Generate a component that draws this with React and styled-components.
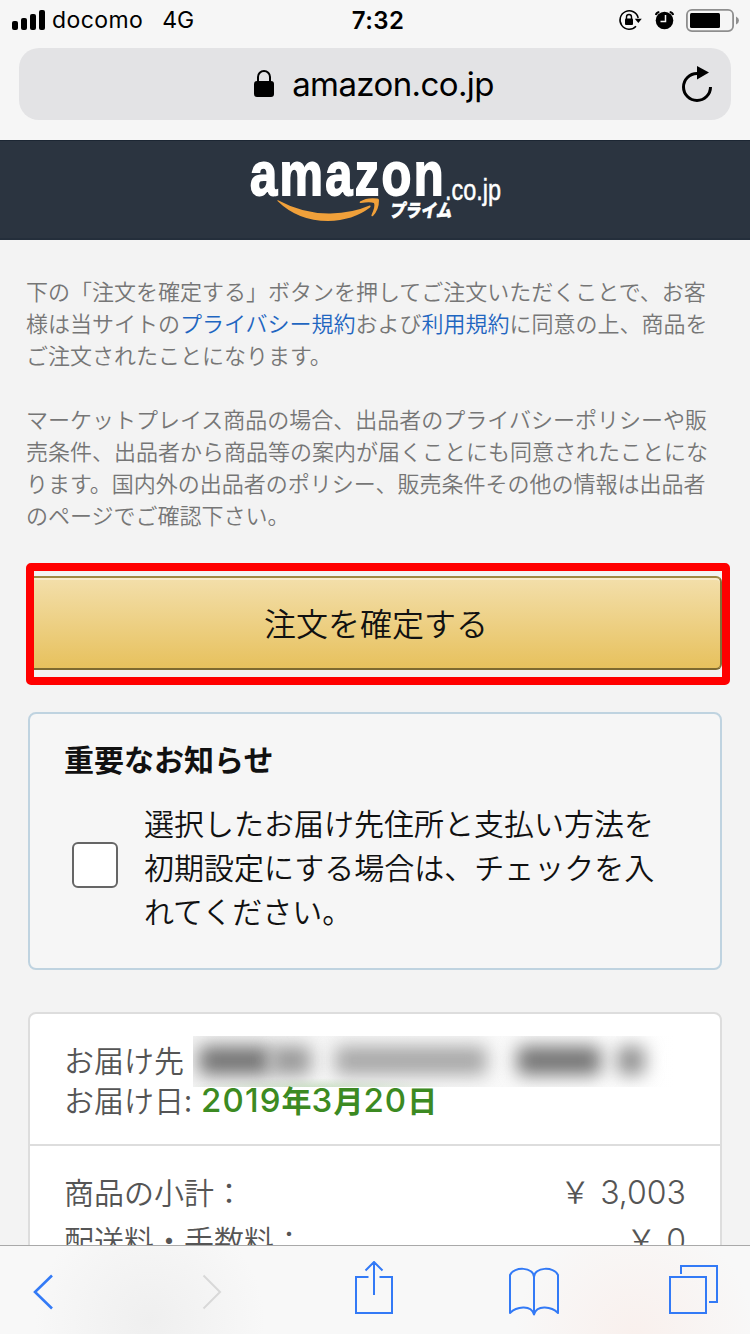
import React from "react";
import styled, { createGlobalStyle } from "styled-components";

const Global = createGlobalStyle`
  * { box-sizing: border-box; }
  body { margin: 0; background: #f3f3f3; }
`;

const jp = `"Noto Sans CJK JP", sans-serif`;
const latin = `Inter, "Noto Sans CJK JP", sans-serif`;

const Screen = styled.div`
  width: 750px;
  height: 1334px;
  overflow: hidden;
  display: flex;
  flex-direction: column;
  background: #f3f3f3;
  font-family: ${jp};
  font-weight: 350;
  color: #111;
`;

const BrowserTop = styled.header`
  flex: none;
  height: 140px;
  background: #f6f6f6;
  padding: 0 19px;
`;

const StatusBar = styled.div`
  height: 48px;
  margin: 0 -19px;
  padding: 0 11px 8px 12px;
  display: grid;
  grid-template-columns: 1fr auto 1fr;
  align-items: center;
  font-family: ${latin};
  color: #000;
`;

const StatusLeft = styled.div`
  display: flex;
  align-items: center;
  font-size: 23px;
  font-weight: 400;
  letter-spacing: 0.4px;
  white-space: nowrap;
`;

const Signal = styled.svg`
  width: 34px;
  height: 20px;
  margin-right: 6px;
`;

const Network = styled.span`
  margin-left: 19px;
  letter-spacing: 0;
`;

const Clock = styled.div`
  font-size: 24px;
  font-weight: 600;
  letter-spacing: 0.4px;
  padding-left: 5px;
`;

const StatusRight = styled.div`
  display: flex;
  justify-content: flex-end;
  align-items: center;
`;

const AddressBar = styled.div`
  height: 72px;
  border-radius: 20px;
  background: #e3e3e5;
  display: grid;
  grid-template-columns: 1fr auto 1fr;
  align-items: center;
  padding: 0 18px 0 17px;
  font-family: ${latin};
  font-size: 33px;
  font-weight: 400;
  color: #000;
`;

const Address = styled.div`
  grid-column: 2;
  display: flex;
  align-items: center;
  gap: 17px;
  margin-right: 2px;
  letter-spacing: -0.6px;
`;

const Reload = styled.svg`
  justify-self: end;
`;

const SiteBar = styled.div`
  flex: none;
  height: 100px;
  background: #2b3440;
  border-top: 1px solid #1c2633;
  border-bottom: 2px solid #242e3b;
  display: flex;
  justify-content: center;
`;

const LogoArt = styled.svg`
  overflow: visible;
`;

const Content = styled.main`
  flex: 1;
  min-height: 0;
  overflow: hidden;
  padding: 34px 28px 0;
`;

const Legal = styled.p`
  margin: 0 -2px 32px;
  font-size: 22px;
  line-height: 32px;
  color: #767676;
`;

const Line = styled.span`
  display: block;
  white-space: nowrap;
`;

const Link = styled.a`
  color: #1f66c1;
`;

const Highlight = styled.div`
  position: relative;
  padding: 12px 0 15px;
  margin-top: 34px;
  height: 121px;

  &::after {
    content: "";
    position: absolute;
    inset: -0.7px -8px 0.3px -2px;
    border: 8px solid #f00;
    border-radius: 5px;
  }
`;

const OrderButton = styled.button`
  display: block;
  width: 100%;
  height: 94px;
  padding: 0 0 2px 2px;
  border: 2px solid;
  border-color: #a08743 #846f36 #7d6930;
  border-radius: 6px;
  background: linear-gradient(#f3dfab, #e7c15d);
  box-shadow: inset 0 2px 0 rgba(255, 255, 255, 0.4);
  font: 350 32px ${jp};
  color: #111;
`;

const Notice = styled.section`
  height: 258px;
  margin-top: 27px;
  padding: 21px 34px;
  border: 2px solid #bfd3e0;
  border-radius: 8px;
  background: #f6f6f6;
`;

const NoticeTitle = styled.h2`
  margin: 0;
  font-size: 30px;
  line-height: 46px;
  font-weight: 700;
`;

const NoticeRow = styled.label`
  display: flex;
  align-items: center;
  gap: 26px;
  margin-top: 19px;
  padding-left: 8px;
  font-size: 30px;
  line-height: 44px;
`;

const Checkbox = styled.span`
  width: 46px;
  height: 46px;
  margin-top: -2px;
  border: 2px solid #666;
  border-radius: 6px;
  background: #fff;
`;

const Card = styled.section`
  margin-top: 42px;
  height: 400px;
  border: 2px solid #ddd;
  border-radius: 8px;
  background: #fff;
  font-size: 30px;
  color: #555;
`;

const Delivery = styled.div`
  height: 132px;
  padding: 25px 34px 0;
  border-bottom: 2px solid #ddd;
  line-height: 40px;
`;

const DeliveryLine = styled.div`
  display: flex;
  height: 40px;
  white-space: nowrap;
`;

const Redacted = styled.span`
  flex: none;
  display: flex;
  align-items: center;
  width: 482px;
  height: 51px;
  margin: -3px 0 0 9px;
  overflow: hidden;
  background:
    radial-gradient(ellipse 130px 9px at 125px 51px, #cfe3c9, rgba(207, 227, 201, 0)),
    linear-gradient(90deg, #f4f4f4, #f9f9f9 60%, #fff);
`;

const Smudge = styled.i`
  flex: none;
  width: ${(p) => p.$w}px;
  height: 29px;
  margin: 0 0 3px ${(p) => p.$gap}px;
  border-radius: 6px;
  background: ${(p) => p.$c};
  filter: blur(9px);
`;

const DeliveryDate = styled.strong`
  position: relative;
  font-weight: 700;
  font-size: 30px;
  color: #3c8a22;
  margin-left: 9px;
`;

const Digits = styled.span`
  font-family: ${latin};
  font-size: 33px;
  font-weight: 550;
  letter-spacing: 1.1px;
`;

const Totals = styled.div`
  padding: 21px 34px 0;
`;

const TotalRow = styled.div`
  display: flex;
  justify-content: space-between;
  height: 48px;
  line-height: 48px;
`;

const Amount = styled.span`
  display: flex;
  gap: 10px;
  line-height: 46px;
`;

const Figure = styled.span`
  font-family: ${latin};
  font-size: 32px;
  font-weight: 300;
  line-height: 52px;
`;

const Toolbar = styled.nav`
  flex: none;
  height: 89px;
  border-top: 1px solid #a9a9a9;
  background:
    radial-gradient(circle at 150px 75px, rgba(238, 238, 238, 0.9), rgba(238, 238, 238, 0) 115px),
    radial-gradient(circle at 635px 90px, #f9f0ed, rgba(249, 240, 237, 0) 120px),
    #f8f8f8;
  display: flex;
  align-items: flex-start;
  padding: 15px 31px 0 32px;
`;

const ToolIcon = styled.svg`
  flex: none;
  width: ${(p) => p.$w}px;
  height: 60px;
  margin-left: ${(p) => p.$gap || 0}px;
  fill: none;
  stroke: ${(p) => (p.$off ? "#d8d8d8" : "#337af6")};
  stroke-width: ${(p) => p.$stroke || 2};
  stroke-linejoin: ${(p) => p.$join || "miter"};
`;

function Logo() {
  return (
    <LogoArt width="254" height="97" viewBox="249 141 254 97">
      <g fontFamily="Liberation Sans" fill="#fff" stroke="#fff">
        <text x="251" y="195" fontSize="62" fontWeight="700" letterSpacing="3" textLength="196" lengthAdjust="spacingAndGlyphs" strokeWidth="1.8">amazon</text>
        <text x="446" y="199.5" fontSize="29" textLength="56" lengthAdjust="spacingAndGlyphs" strokeWidth="0.5">.co.jp</text>
      </g>
      <text x="390.500" y="217" fontFamily="Noto Sans CJK JP" fontSize="18" fontWeight="900" fill="#fff" stroke="#fff" strokeWidth="0.6" textLength="62" lengthAdjust="spacingAndGlyphs" transform="translate(38 0) skewX(-10)">プライム</text>
      <path d="M278.500 200q26 14 53 13.500q22-.500 39-8q2-.300.500 2q-17 13-42 13.500q-30 0-50.500-20z" fill="#f0a03a" />
      <path d="M361 201.500q7-4.500 17.500-3q1.500 0 1.500 2q0 9-6 15.500q-2 1-1.500-1q4-9 2.500-12q-4-1.500-13 0q-2 0-1-1.500z" fill="#f0a03a" />
    </LogoArt>
  );
}

export default function App() {
  return (
    <Screen>
      <Global />
      <BrowserTop>
        <StatusBar>
          <StatusLeft>
            <Signal viewBox="0 0 34 20">
              <rect x="0" y="11" width="6" height="9" rx="2" />
              <rect x="9" y="8" width="6" height="12" rx="2" />
              <rect x="18" y="4" width="6" height="16" rx="2" />
              <rect x="27" y="0" width="6" height="20" rx="2" />
            </Signal>
            docomo<Network>4G</Network>
          </StatusLeft>
          <Clock>7:32</Clock>
          <StatusRight>
            <svg width="122" height="28" viewBox="617 6 122 28">
              <path d="M636 26.200a9.200 9.200 0 1 1 2.200-8.200" fill="none" stroke="#000" strokeWidth="1.500" />
              <path d="M634.800 18.800h7l-3.500 4.200z" />
              <rect x="625" y="18.500" width="8" height="6.500" rx="1" />
              <path d="M626.500 19v-2a2.500 2.500 0 0 1 5 0v2" fill="none" stroke="#000" strokeWidth="1.400" />
              <circle cx="664.500" cy="20.500" r="8.800" />
              <path d="M665.500 15v6.500h-5" fill="none" stroke="#f6f6f6" strokeWidth="1.500" />
              <path d="M655.800 15q.500-2.500 3.500-3M669.700 12q3 .500 3.500 3" fill="none" stroke="#000" strokeWidth="1.800" />
              <rect x="686.900" y="9.900" width="46.200" height="21.200" rx="5" fill="none" stroke="#8e8e8e" strokeWidth="1.800" />
              <rect x="690" y="13" width="30" height="15" rx="1.500" />
              <path d="M736 16.500q3 1.500 3 4t-3 4z" fill="#8e8e8e" />
            </svg>
          </StatusRight>
        </StatusBar>
        <AddressBar>
          <Address>
            <svg width="22" height="30" viewBox="0 0 22 30">
              <rect x="1" y="12" width="20" height="16" rx="3" />
              <path d="M5 13V8a6 6 0 0 1 12 0v5" fill="none" stroke="#000" strokeWidth="2" />
            </svg>
            amazon.co.jp
          </Address>
          <Reload width="32" height="38" viewBox="681 65 32 38">
            <path d="M710.500 87a13.500 13.500 0 1 1-13.500-13.500" fill="none" stroke="#000" strokeWidth="3" />
            <path d="M697 66v13.500l12-7z" />
          </Reload>
        </AddressBar>
      </BrowserTop>

      <SiteBar>
        <Logo />
      </SiteBar>

      <Content>
        <Legal>
          <Line>下の「注文を確定する」ボタンを押してご注文いただくことで、お客</Line>
          <Line>
            様は当サイトの<Link>プライバシー規約</Link>および<Link>利用規約</Link>に同意の上、商品を
          </Line>
          <Line>ご注文されたことになります。</Line>
        </Legal>
        <Legal>
          <Line>マーケットプレイス商品の場合、出品者のプライバシーポリシーや販</Line>
          <Line>売条件、出品者から商品等の案内が届くことにも同意されたことにな</Line>
          <Line>ります。国内外の出品者のポリシー、販売条件その他の情報は出品者</Line>
          <Line>のページでご確認下さい。</Line>
        </Legal>

        <Highlight>
          <OrderButton>注文を確定する</OrderButton>
        </Highlight>

        <Notice>
          <NoticeTitle>重要なお知らせ</NoticeTitle>
          <NoticeRow>
            <Checkbox />
            <span>
              <Line>選択したお届け先住所と支払い方法を</Line>
              <Line>初期設定にする場合は、チェックを入</Line>
              <Line>れてください。</Line>
            </span>
          </NoticeRow>
        </Notice>

        <Card>
          <Delivery>
            <DeliveryLine>
              お届け先
              <Redacted>
                <Smudge $w={72} $gap={6} $c="#757575" />
                <Smudge $w={40} $gap={0} $c="#999" />
                <Smudge $w={152} $gap={24} $c="#a8a8a8" />
                <Smudge $w={84} $gap={30} $c="#757575" />
                <Smudge $w={28} $gap={16} $c="#909090" />
              </Redacted>
            </DeliveryLine>
            <DeliveryLine>
              お届け日:
              <DeliveryDate>
                <Digits>2019</Digits>年<Digits>3</Digits>月<Digits>20</Digits>日
              </DeliveryDate>
            </DeliveryLine>
          </Delivery>
          <Totals>
            <TotalRow>
              <span>商品の小計：</span>
              <Amount>
                ￥<Figure>3,003</Figure>
              </Amount>
            </TotalRow>
            <TotalRow>
              <span>配送料・手数料：</span>
              <Amount>
                ￥<Figure>0</Figure>
              </Amount>
            </TotalRow>
          </Totals>
        </Card>
      </Content>

      <Toolbar>
        <ToolIcon $w={24} $stroke={2.6} viewBox="32 1261 24 60">
          <path d="M52 1275.500L35 1292L52 1308.500" />
        </ToolIcon>
        <ToolIcon $w={24} $gap={144} $off viewBox="200 1261 24 60">
          <path d="M203.500 1275.500L220 1292L203.500 1308.500" />
        </ToolIcon>
        <ToolIcon $w={40} $gap={130} viewBox="354 1261 40 60">
          <path d="M368.500 1277H356v36h36v-36h-12.500M374 1295v-32M365.500 1270.500l8.500-8.500l8.500 8.500" />
        </ToolIcon>
        <ToolIcon $w={52} $gap={114} $join="round" viewBox="508 1261 52 60">
          <path d="M534 1314.500v-37.500c0-10-20-11-24-2v38c6-6 21-9 24 1.500c3-10.500 18-7.500 24-1.500v-38c-4-9-24-8-24 2" />
        </ToolIcon>
        <ToolIcon $w={50} $gap={109} viewBox="669 1261 50 60">
          <path d="M670 1277h36v36h-36zM681 1274v-8h36v36h-8" />
        </ToolIcon>
      </Toolbar>
    </Screen>
  );
}
